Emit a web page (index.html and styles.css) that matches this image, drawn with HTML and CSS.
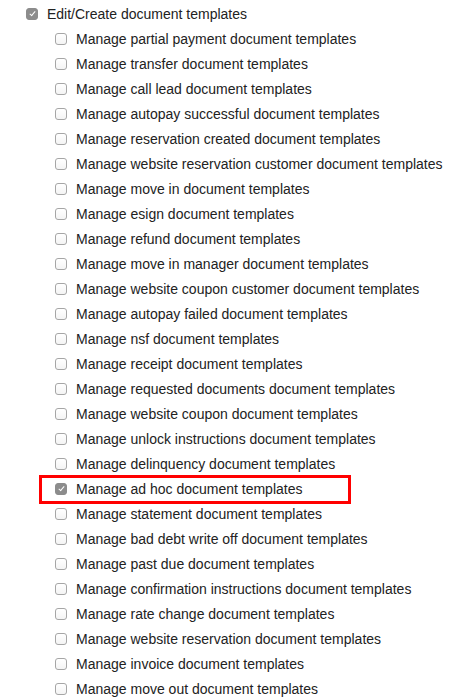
FILE: index.html
```html
<!DOCTYPE html>
<html>
<head>
<meta charset="utf-8">
<link rel="stylesheet" href="styles.css">
</head>
<body>
<div class="perms">
  <label class="row top"><input type="checkbox" class="cb" checked disabled><span>Edit/Create document templates</span></label>
  <ul class="sub">
    <li><label class="row"><input type="checkbox" class="cb"><span>Manage partial payment document templates</span></label></li>
    <li><label class="row"><input type="checkbox" class="cb"><span>Manage transfer document templates</span></label></li>
    <li><label class="row"><input type="checkbox" class="cb"><span>Manage call lead document templates</span></label></li>
    <li><label class="row"><input type="checkbox" class="cb"><span>Manage autopay successful document templates</span></label></li>
    <li><label class="row"><input type="checkbox" class="cb"><span>Manage reservation created document templates</span></label></li>
    <li><label class="row"><input type="checkbox" class="cb"><span>Manage website reservation customer document templates</span></label></li>
    <li><label class="row"><input type="checkbox" class="cb"><span>Manage move in document templates</span></label></li>
    <li><label class="row"><input type="checkbox" class="cb"><span>Manage esign document templates</span></label></li>
    <li><label class="row"><input type="checkbox" class="cb"><span>Manage refund document templates</span></label></li>
    <li><label class="row"><input type="checkbox" class="cb"><span>Manage move in manager document templates</span></label></li>
    <li><label class="row"><input type="checkbox" class="cb"><span>Manage website coupon customer document templates</span></label></li>
    <li><label class="row"><input type="checkbox" class="cb"><span>Manage autopay failed document templates</span></label></li>
    <li><label class="row"><input type="checkbox" class="cb"><span>Manage nsf document templates</span></label></li>
    <li><label class="row"><input type="checkbox" class="cb"><span>Manage receipt document templates</span></label></li>
    <li><label class="row"><input type="checkbox" class="cb"><span>Manage requested documents document templates</span></label></li>
    <li><label class="row"><input type="checkbox" class="cb"><span>Manage website coupon document templates</span></label></li>
    <li><label class="row"><input type="checkbox" class="cb"><span>Manage unlock instructions document templates</span></label></li>
    <li><label class="row"><input type="checkbox" class="cb"><span>Manage delinquency document templates</span></label></li>
    <li><label class="row highlight"><input type="checkbox" class="cb" checked disabled><span>Manage ad hoc document templates</span></label></li>
    <li><label class="row"><input type="checkbox" class="cb"><span>Manage statement document templates</span></label></li>
    <li><label class="row"><input type="checkbox" class="cb"><span>Manage bad debt write off document templates</span></label></li>
    <li><label class="row"><input type="checkbox" class="cb"><span>Manage past due document templates</span></label></li>
    <li><label class="row"><input type="checkbox" class="cb"><span>Manage confirmation instructions document templates</span></label></li>
    <li><label class="row"><input type="checkbox" class="cb"><span>Manage rate change document templates</span></label></li>
    <li><label class="row"><input type="checkbox" class="cb"><span>Manage website reservation document templates</span></label></li>
    <li><label class="row"><input type="checkbox" class="cb"><span>Manage invoice document templates</span></label></li>
    <li><label class="row"><input type="checkbox" class="cb"><span>Manage move out document templates</span></label></li>
  </ul>
</div>
</body>
</html>
```
FILE: styles.css
```css
html, body {
  margin: 0;
  padding: 0;
  background: #fff;
}
body {
  font-family: "Liberation Sans", Arial, Helvetica, sans-serif;
  font-size: 14px;
  color: #222;
}
.perms {
  padding: 1px 0 0 26px;
}
.row {
  display: inline-flex;
  align-items: center;
  height: 25px;
  gap: 9px;
  position: relative;
}
.sub {
  list-style: none;
  margin: 0;
  padding: 0 0 0 29px;
}
.sub li {
  height: 25px;
}
.cb {
  -webkit-appearance: none;
  appearance: none;
  margin: 0;
  width: 12px;
  height: 12px;
  box-sizing: border-box;
  border: 1px solid #a6a6a6;
  border-radius: 3px;
  background: linear-gradient(#fff, #f4f4f4);
  flex: none;
  position: relative;
}
.cb:checked {
  background: #8c8c8c;
  border-color: #8c8c8c;
}
.cb:checked::after {
  content: "";
  position: absolute;
  left: 3.5px;
  top: 1.5px;
  width: 2px;
  height: 5px;
  border: solid #fff;
  border-width: 0 1.5px 1.5px 0;
  transform: rotate(40deg);
}
.highlight::after {
  content: "";
  position: absolute;
  left: -16px;
  top: -1px;
  width: 306px;
  height: 23px;
  border: 3px solid #f00;
}
```
